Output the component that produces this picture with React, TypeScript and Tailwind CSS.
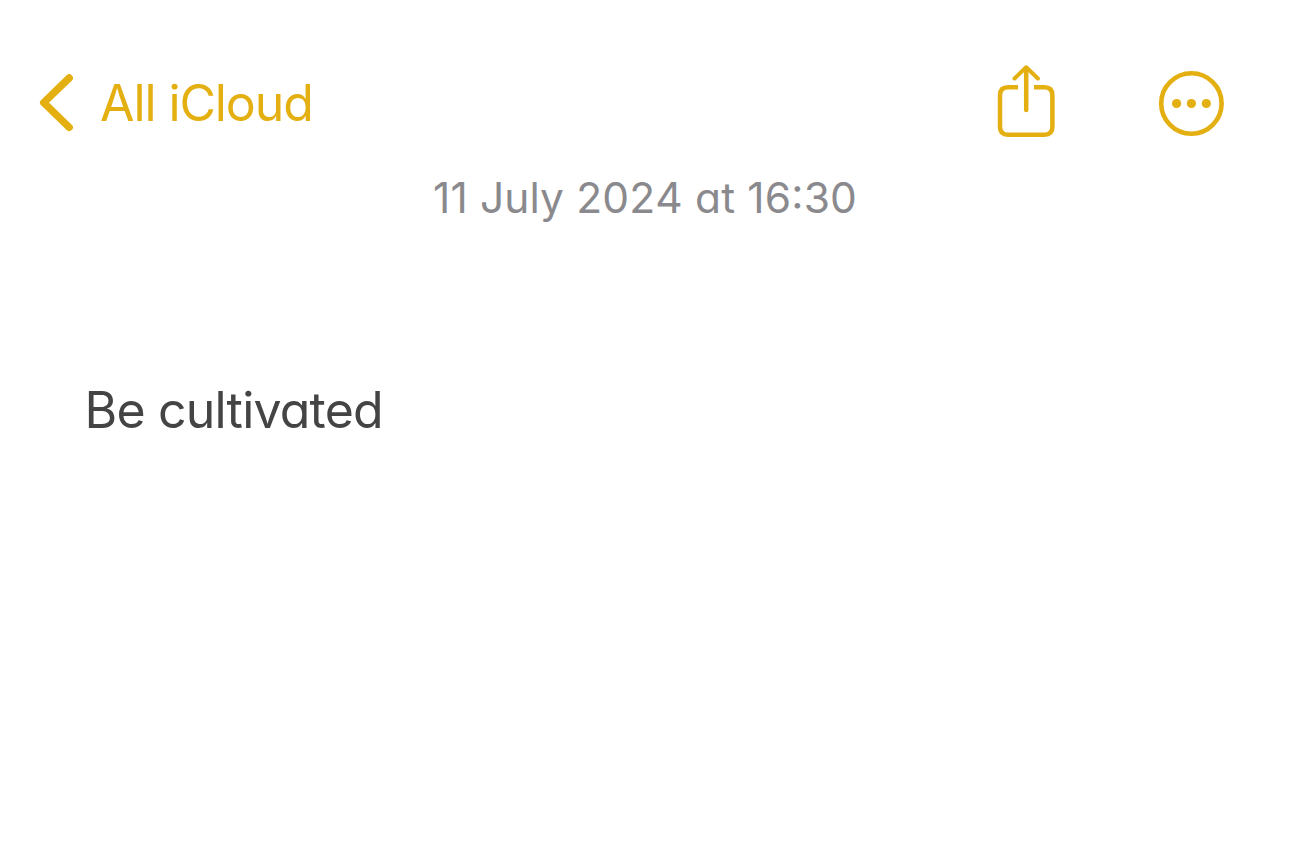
interface Note {
    folder: string;
    editedAt: string;
    body: string;
}

const note: Note = {
    folder: 'All iCloud',
    editedAt: '11 July 2024 at 16:30',
    body: 'Be cultivated'
};

function BackIcon() {
    return (
        <svg width="34" height="58" viewBox="0 0 34 58" fill="none" stroke="currentColor" strokeWidth="7.4" strokeLinecap="round" strokeLinejoin="round">
            <path d="M30.2 4 4.7 28.7l25.5 24.6" />
        </svg>
    );
}

function ShareIcon() {
    return (
        <svg width="58" height="78" viewBox="0 0 58 78" fill="none" stroke="currentColor" strokeWidth="4.5" strokeLinecap="round" strokeLinejoin="round">
            <path d="M21 23.2H11Q3 23.2 3 31.2v31.6q0 8 8 8h36.4q8 0 8-8V31.2q0-8-8-8H37" strokeLinecap="butt" />
            <path d="M29.2 46V4" />
            <path d="m17.5 14.5 11.7-11.2 11.7 11.2" strokeWidth="4" />
        </svg>
    );
}

function MoreIcon() {
    return (
        <svg width="66" height="66" viewBox="0 0 66 66" fill="none">
            <circle cx="33.4" cy="33.5" r="30.2" stroke="currentColor" strokeWidth="4.6" />
            <circle cx="18.6" cy="33.5" r="4.6" fill="currentColor" />
            <circle cx="33.4" cy="33.5" r="4.6" fill="currentColor" />
            <circle cx="48.3" cy="33.5" r="4.6" fill="currentColor" />
        </svg>
    );
}

export default function App() {
    return (
        <div className="min-h-screen bg-white font-['Inter',sans-serif] [font-feature-settings:'cv11']">
            <header className="flex items-center justify-between pt-[64px] pr-[66px] pl-[39px] text-[#e4af10]">
                <button className="flex items-center gap-[27px]">
                    <BackIcon />
                    <span className="text-[50px] leading-[78px] tracking-[-1.1px] whitespace-nowrap">{note.folder}</span>
                </button>

                <div className="flex items-center gap-[103px]">
                    <button aria-label="Share">
                        <ShareIcon />
                    </button>
                    <button aria-label="More">
                        <MoreIcon />
                    </button>
                </div>
            </header>

            <main>
                {/* 'case' lifts the colon to the middle of the digits */}
                <p className="mt-[26px] text-center text-[42.5px] leading-[60px] tracking-[0.15px] text-[#8a8a8e] [font-feature-settings:'cv11','case','kern'_0]">
                    {note.editedAt}
                </p>
                <p className="mt-[152px] pl-[84.5px] text-[50px] leading-[60px] tracking-[-0.8px] text-[#444444]">{note.body}</p>
            </main>
        </div>
    );
}
